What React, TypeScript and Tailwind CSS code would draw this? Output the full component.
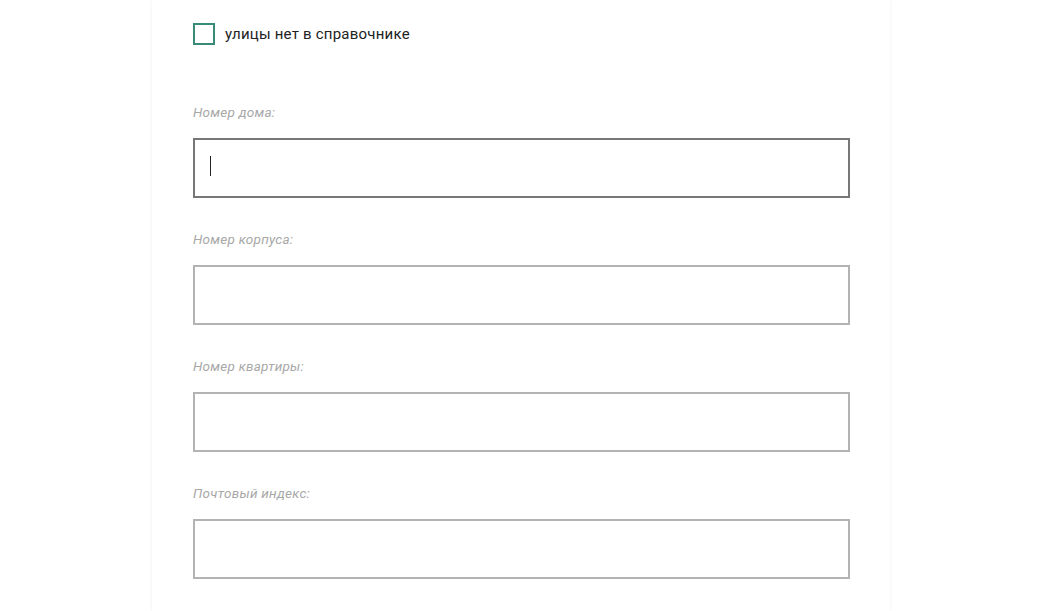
import { useState } from "react";

const fields = [
  { id: "house", label: "Номер дома:", focused: true },
  { id: "building", label: "Номер корпуса:", focused: false },
  { id: "flat", label: "Номер квартиры:", focused: false },
  { id: "zip", label: "Почтовый индекс:", focused: false },
];

export default function App() {
  const [noStreet, setNoStreet] = useState(false);
  const [values, setValues] = useState<Record<string, string>>({});

  return (
    <div className="w-full h-[611px] overflow-hidden bg-white font-['Roboto',sans-serif]">
      <div className="ml-[152px] w-[738px] h-full bg-white shadow-[0_0_3px_rgba(0,0,0,0.08)] px-[41px] pt-[23px]">
        <label className="flex items-center gap-[10px] cursor-pointer">
          <span
            className="w-[22px] h-[22px] border-2 border-[#3a8a7a] flex items-center justify-center"
            onClick={() => setNoStreet(!noStreet)}
          >
            {noStreet && <span className="w-[10px] h-[10px] bg-[#3a8a7a]" />}
          </span>
          <span className="text-[15px] tracking-[0.22px] text-[#222] leading-[22px]">улицы нет в справочнике</span>
        </label>

        <div className="flex flex-col mt-[59px]">
          {fields.map((f) => (
            <div key={f.id} className="flex flex-col">
              <span className="text-[13.5px] tracking-[0.25px] italic text-[#a8a8a8] leading-[16px] mb-[18px]">
                {f.label}
              </span>
              <div className="relative mb-[33px]">
                <input
                  className={`w-[657px] h-[60px] border-2 outline-none px-4 text-[15px] text-[#222] ${
                    f.focused ? "border-[#777]" : "border-[#b3b3b3]"
                  }`}
                  value={values[f.id] ?? ""}
                  onChange={(e) => setValues({ ...values, [f.id]: e.target.value })}
                />
                {f.focused && !values[f.id] && (
                  <span className="absolute left-[17px] top-[18px] w-px h-[20px] bg-[#222]" />
                )}
              </div>
            </div>
          ))}
        </div>
      </div>
    </div>
  );
}
